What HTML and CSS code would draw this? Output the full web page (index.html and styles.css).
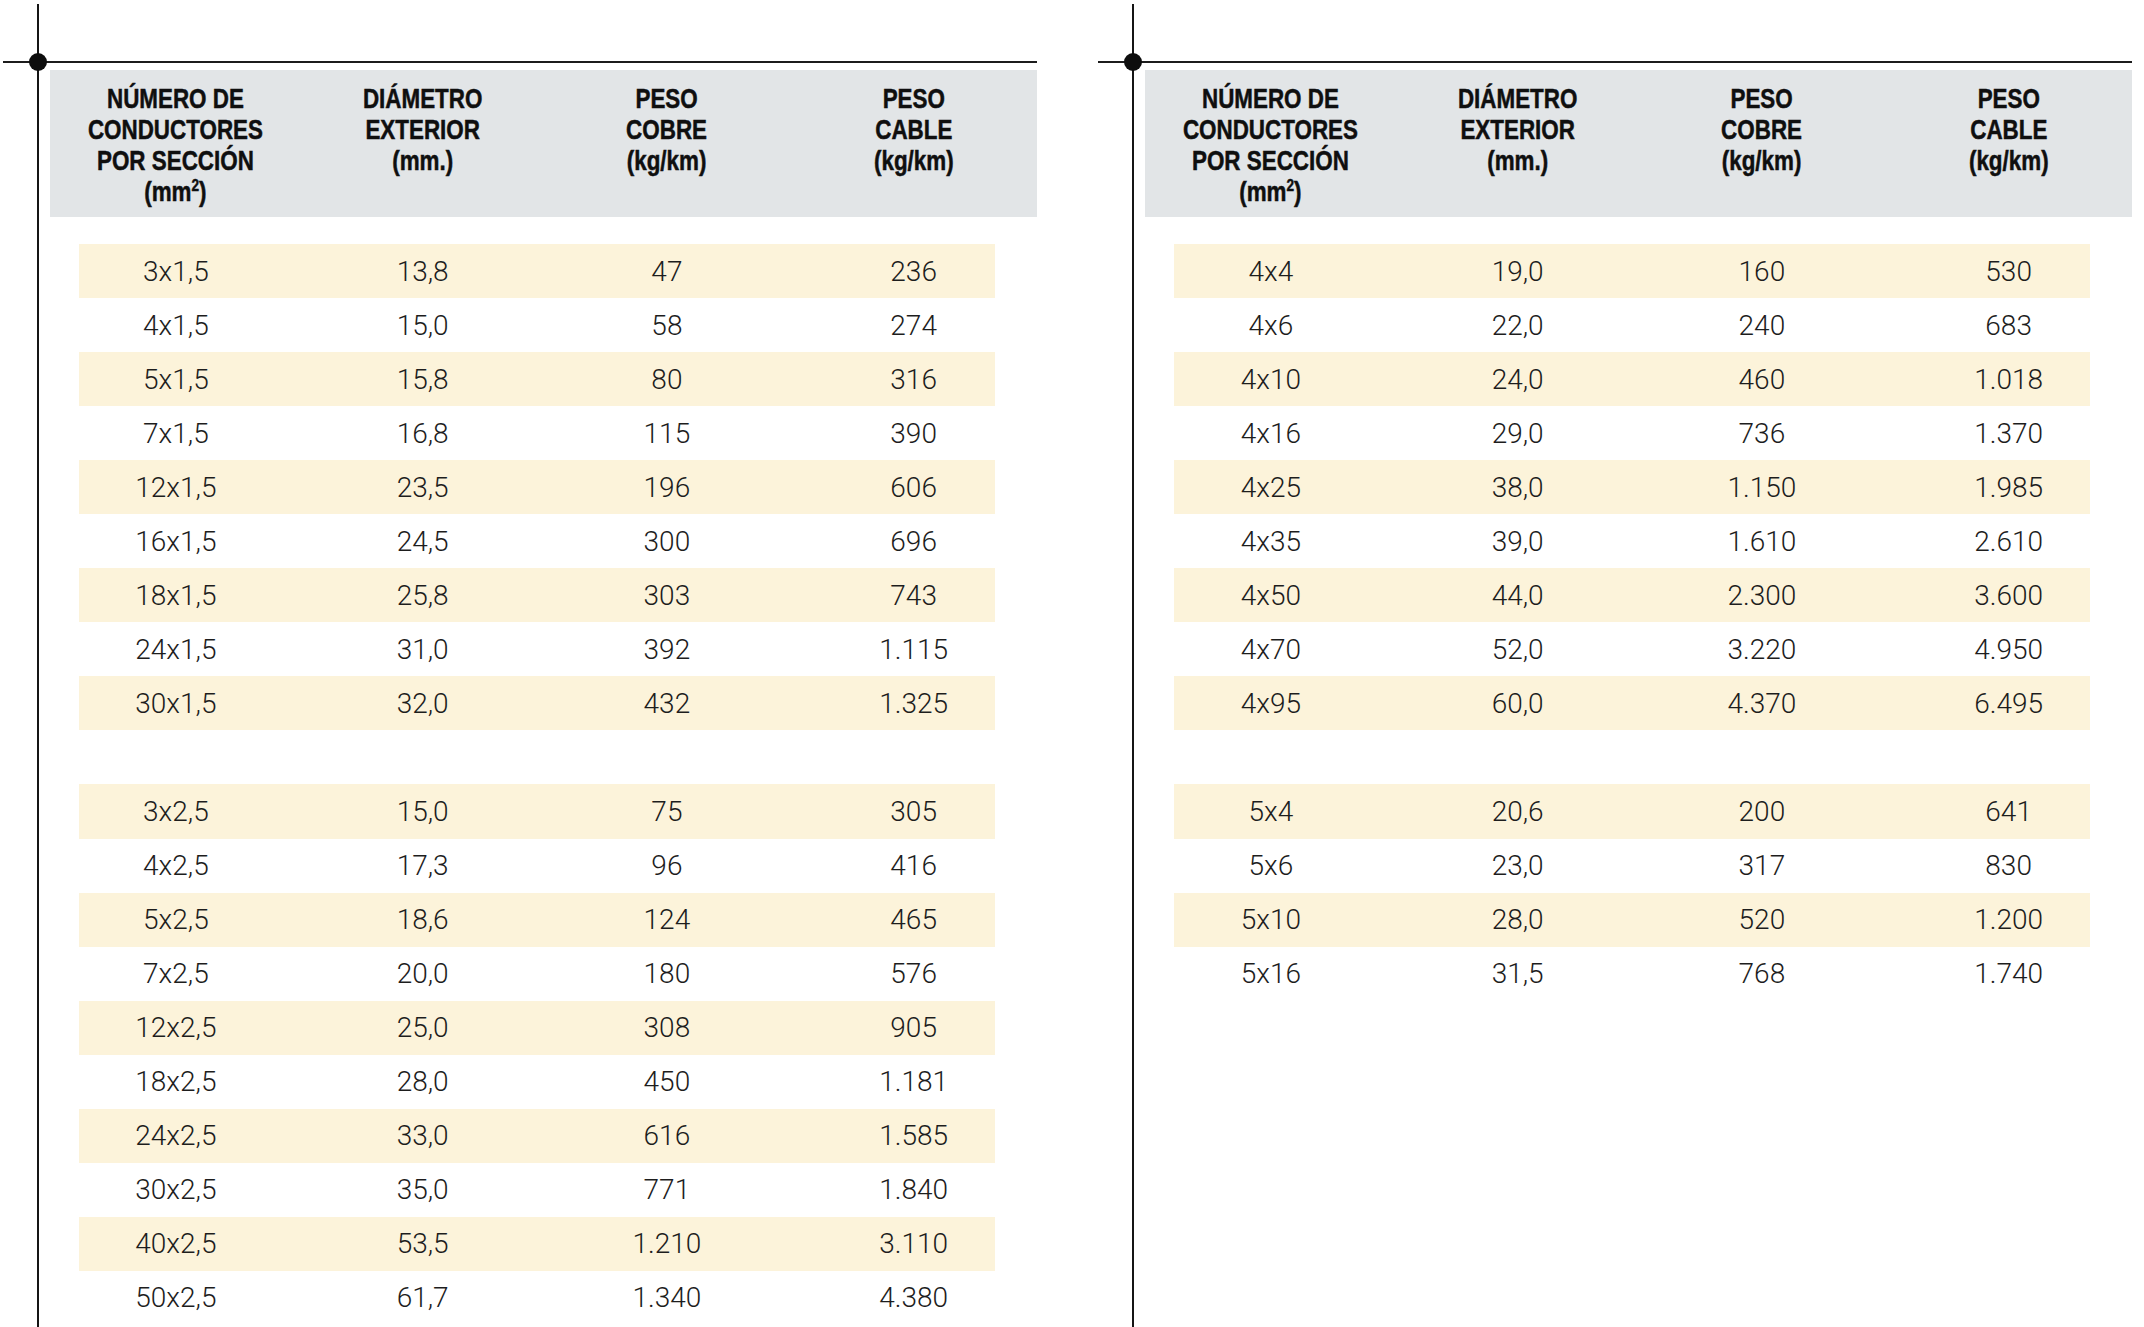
FILE: index.html
```html
<!DOCTYPE html>
<html lang="es">
<head>
<meta charset="utf-8">
<title>Tabla de cables</title>
<link rel="stylesheet" href="styles.css">
</head>
<body>
<div class="page">
  <section class="panel">
    <div class="frame">
      <div class="rule"><span class="dot"></span></div>
      <div class="head">
        <div class="hc"><span>NÚMERO DE<br>CONDUCTORES<br>POR SECCIÓN<br>(mm<sup>2</sup>)</span></div>
        <div class="hc"><span>DIÁMETRO<br>EXTERIOR<br>(mm.)</span></div>
        <div class="hc"><span>PESO<br>COBRE<br>(kg/km)</span></div>
        <div class="hc"><span>PESO<br>CABLE<br>(kg/km)</span></div>
      </div>
      <div class="group">
        <div class="row"><span>3x1,5</span><span>13,8</span><span>47</span><span>236</span></div>
        <div class="row"><span>4x1,5</span><span>15,0</span><span>58</span><span>274</span></div>
        <div class="row"><span>5x1,5</span><span>15,8</span><span>80</span><span>316</span></div>
        <div class="row"><span>7x1,5</span><span>16,8</span><span>115</span><span>390</span></div>
        <div class="row"><span>12x1,5</span><span>23,5</span><span>196</span><span>606</span></div>
        <div class="row"><span>16x1,5</span><span>24,5</span><span>300</span><span>696</span></div>
        <div class="row"><span>18x1,5</span><span>25,8</span><span>303</span><span>743</span></div>
        <div class="row"><span>24x1,5</span><span>31,0</span><span>392</span><span>1.115</span></div>
        <div class="row"><span>30x1,5</span><span>32,0</span><span>432</span><span>1.325</span></div>
      </div>
      <div class="group">
        <div class="row"><span>3x2,5</span><span>15,0</span><span>75</span><span>305</span></div>
        <div class="row"><span>4x2,5</span><span>17,3</span><span>96</span><span>416</span></div>
        <div class="row"><span>5x2,5</span><span>18,6</span><span>124</span><span>465</span></div>
        <div class="row"><span>7x2,5</span><span>20,0</span><span>180</span><span>576</span></div>
        <div class="row"><span>12x2,5</span><span>25,0</span><span>308</span><span>905</span></div>
        <div class="row"><span>18x2,5</span><span>28,0</span><span>450</span><span>1.181</span></div>
        <div class="row"><span>24x2,5</span><span>33,0</span><span>616</span><span>1.585</span></div>
        <div class="row"><span>30x2,5</span><span>35,0</span><span>771</span><span>1.840</span></div>
        <div class="row"><span>40x2,5</span><span>53,5</span><span>1.210</span><span>3.110</span></div>
        <div class="row"><span>50x2,5</span><span>61,7</span><span>1.340</span><span>4.380</span></div>
      </div>
    </div>
  </section>
  <section class="panel">
    <div class="frame">
      <div class="rule"><span class="dot"></span></div>
      <div class="head">
        <div class="hc"><span>NÚMERO DE<br>CONDUCTORES<br>POR SECCIÓN<br>(mm<sup>2</sup>)</span></div>
        <div class="hc"><span>DIÁMETRO<br>EXTERIOR<br>(mm.)</span></div>
        <div class="hc"><span>PESO<br>COBRE<br>(kg/km)</span></div>
        <div class="hc"><span>PESO<br>CABLE<br>(kg/km)</span></div>
      </div>
      <div class="group">
        <div class="row"><span>4x4</span><span>19,0</span><span>160</span><span>530</span></div>
        <div class="row"><span>4x6</span><span>22,0</span><span>240</span><span>683</span></div>
        <div class="row"><span>4x10</span><span>24,0</span><span>460</span><span>1.018</span></div>
        <div class="row"><span>4x16</span><span>29,0</span><span>736</span><span>1.370</span></div>
        <div class="row"><span>4x25</span><span>38,0</span><span>1.150</span><span>1.985</span></div>
        <div class="row"><span>4x35</span><span>39,0</span><span>1.610</span><span>2.610</span></div>
        <div class="row"><span>4x50</span><span>44,0</span><span>2.300</span><span>3.600</span></div>
        <div class="row"><span>4x70</span><span>52,0</span><span>3.220</span><span>4.950</span></div>
        <div class="row"><span>4x95</span><span>60,0</span><span>4.370</span><span>6.495</span></div>
      </div>
      <div class="group">
        <div class="row"><span>5x4</span><span>20,6</span><span>200</span><span>641</span></div>
        <div class="row"><span>5x6</span><span>23,0</span><span>317</span><span>830</span></div>
        <div class="row"><span>5x10</span><span>28,0</span><span>520</span><span>1.200</span></div>
        <div class="row"><span>5x16</span><span>31,5</span><span>768</span><span>1.740</span></div>
      </div>
    </div>
  </section>
</div>
</body>
</html>
```

FILE: styles.css
```css
html, body {
  margin: 0;
  padding: 0;
  background: #ffffff;
}

.page {
  display: flex;
  gap: 61px;
  padding: 4px 0 0 3px;
  height: 1327px;
  box-sizing: border-box;
  overflow: hidden;
}

.panel {
  flex: 0 0 1034px;
  width: 1034px;
  padding-left: 34px;
  box-sizing: border-box;
  height: 100%;
}

.frame {
  border-left: 2px solid #151515;
  height: 100%;
  padding-top: 57px;
  box-sizing: border-box;
  display: block;
}

.rule {
  position: relative;
  height: 2px;
  background: #1c1c1c;
  margin-left: -36px;
}

.dot {
  position: absolute;
  left: 26px;
  top: -8px;
  width: 18px;
  height: 18px;
  border-radius: 50%;
  background: #0d0d0d;
}

.head {
  margin: 7px 0 27px 11px;
  height: 147px;
  box-sizing: border-box;
  padding-top: 13px;
  background: #e2e5e7;
  display: grid;
  grid-template-columns: repeat(4, 1fr);
  font-family: "Liberation Sans", Arial, sans-serif;
  font-weight: 700;
  font-size: 28px;
  line-height: 31px;
  color: #0f0f0f;
  text-align: center;
}

.hc {
  display: flex;
  justify-content: center;
}

.hc:nth-child(-n+2),
.row span:nth-child(-n+2) {
  padding-left: 5px;
}

.hc span {
  display: inline-block;
  white-space: nowrap;
  transform: scaleX(0.8);
  transform-origin: 50% 0;
  -webkit-text-stroke: 0.5px #0f0f0f;
}

.hc sup {
  font-size: 17px;
  line-height: 0;
  vertical-align: 10px;
}

.group {
  margin-left: 11px;
  margin-bottom: 54.05px;
}

.row {
  display: grid;
  grid-template-columns: repeat(4, 1fr);
  align-items: center;
  height: 54.05px;
  font-family: "Roboto", "Liberation Sans", sans-serif;
  font-weight: 300;
  font-size: 28px;
  color: #1d1d1d;
  text-align: center;
}

.row:nth-child(odd) {
  background: linear-gradient(#fcf3da, #fcf3da) no-repeat 29px 0 / 916px 100%;
}
```
